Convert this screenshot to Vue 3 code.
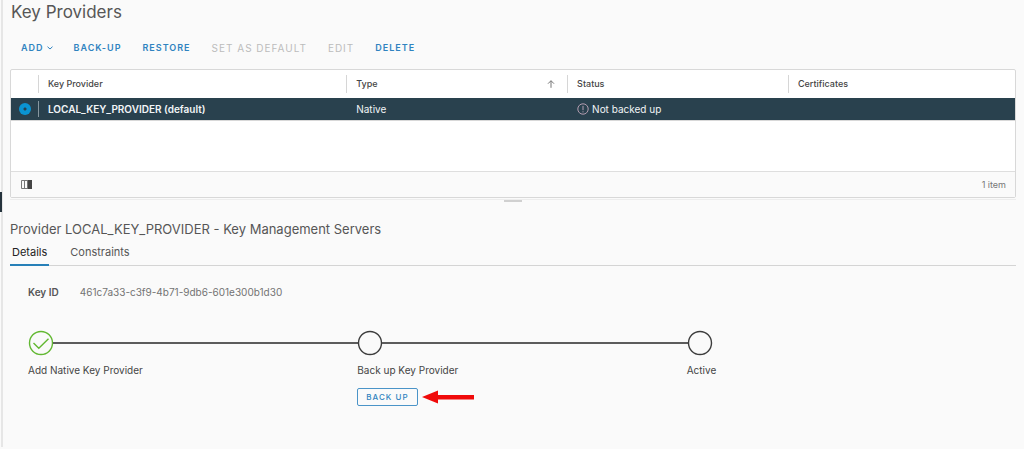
<script setup>
import { ref } from 'vue'

const actions = [
  { label: 'ADD', menu: true },
  { label: 'BACK-UP' },
  { label: 'RESTORE' },
  { label: 'SET AS DEFAULT', disabled: true },
  { label: 'EDIT', disabled: true },
  { label: 'DELETE' },
]
const providers = [
  { name: 'LOCAL_KEY_PROVIDER (default)', type: 'Native', status: 'Not backed up' },
]
const tabs = ['Details', 'Constraints']
const selected = ref(0)
const activeTab = ref('Details')
</script>

<template>
  <main class="page">
    <div class="side-handle"></div>
    <h1>Key Providers</h1>

    <div class="toolbar">
      <button v-for="a in actions" :key="a.label" type="button" :disabled="a.disabled">
        {{ a.label }}
        <svg v-if="a.menu" class="caret" width="6" height="4" viewBox="0 0 6 4" aria-hidden="true">
          <path d="M0.5 0.7 L3 3 L5.5 0.7" />
        </svg>
      </button>
    </div>

    <section class="grid">
      <table>
        <colgroup>
          <col class="c-pick" /><col class="c-name" /><col class="c-mid" /><col class="c-mid" /><col />
        </colgroup>
        <thead>
          <tr>
            <th></th>
            <th scope="col">Key Provider</th>
            <th scope="col">
              <span class="sorted">Type
                <svg width="8" height="8" viewBox="0 0 8 8" aria-hidden="true">
                  <path d="M4 7.8 V0.8 M1 3.7 L4 0.7 L7 3.7" />
                </svg>
              </span>
            </th>
            <th scope="col">Status</th>
            <th scope="col">Certificates</th>
          </tr>
        </thead>
        <tbody>
          <tr v-for="(p, i) in providers" :key="p.name">
            <td class="pick">
              <input v-model="selected" type="radio" name="provider" :value="i" :aria-label="p.name" />
            </td>
            <td class="name">{{ p.name }}</td>
            <td>{{ p.type }}</td>
            <td>
              <span class="status">
                <svg width="12" height="12" viewBox="0 0 12 12" aria-hidden="true">
                  <circle cx="6" cy="6" r="5.2" />
                  <path d="M6 2.8 V7.2 M6 8.3 V9.4" />
                </svg>
                {{ p.status }}
              </span>
            </td>
            <td></td>
          </tr>
        </tbody>
      </table>
      <div class="blank"></div>
      <footer>
        <button type="button" class="columns" aria-label="Columns">
          <svg width="11" height="9" viewBox="0 0 11 9" aria-hidden="true">
            <path class="frame" d="M0.5 0.5 H10.5 V8.5 H0.5 Z M3.5 0.5 V8.5 M6.5 0.5 V8.5" />
            <path class="fill" d="M7 0 H11 V9 H7 Z" />
          </svg>
        </button>
        <span>1 item</span>
      </footer>
    </section>
    <div class="splitter"><i></i></div>

    <h2>Provider LOCAL_KEY_PROVIDER - Key Management Servers</h2>
    <div class="tabs" role="tablist">
      <button
        v-for="t in tabs"
        :key="t"
        type="button"
        role="tab"
        :aria-selected="t === activeTab"
        :class="{ active: t === activeTab }"
        @click="activeTab = t"
      >{{ t }}</button>
    </div>

    <dl>
      <dt>Key ID</dt>
      <dd>461c7a33-c3f9-4b71-9db6-601e300b1d30</dd>
    </dl>

    <ol class="steps">
      <li>
        <div class="track">
          <svg class="done" width="26" height="26" viewBox="0 0 26 26" aria-hidden="true">
            <circle cx="13" cy="13" r="11.5" />
            <path d="M5.5 13 L10.8 18.3 L20.5 8.8" />
          </svg>
          <i class="line"></i>
        </div>
        <p>Add Native Key Provider</p>
      </li>
      <li>
        <div class="track">
          <svg width="26" height="26" viewBox="0 0 26 26" aria-hidden="true">
            <circle cx="13" cy="13" r="11.5" />
          </svg>
          <i class="line"></i>
        </div>
        <p>Back up Key Provider</p>
        <div class="action">
          <button type="button">BACK UP</button>
          <svg class="arrow" width="52" height="14" viewBox="0 0 52 14" aria-hidden="true">
            <path d="M0 7 L16 0.5 V5 H52 V9.5 H16 V13.5 Z" />
          </svg>
        </div>
      </li>
      <li>
        <div class="track">
          <svg width="26" height="26" viewBox="0 0 26 26" aria-hidden="true">
            <circle cx="13" cy="13" r="11.5" />
          </svg>
        </div>
        <p>Active</p>
      </li>
    </ol>
  </main>
</template>

<style>
body {
  background: #fafafa;
}
</style>

<style scoped>
.page {
  position: relative;
  box-sizing: border-box;
  min-height: calc(100vh - 2px);
  margin-left: 1px;
  padding: 1px 8px 0 7px;
  border-left: 2px solid #e6e6e6;
  color: #565656;
  font-family: Inter, "Liberation Sans", sans-serif;
  font-size: 10px;
  line-height: 14px;
}
.side-handle {
  position: absolute;
  left: -3px;
  top: 192px;
  width: 2px;
  height: 20px;
  background: #25333d;
}
h1, h2, p, dl, dd, ol {
  margin: 0;
  padding: 0;
  font-weight: 400;
}
h1 {
  margin-left: 1px;
  font-size: 17px;
  line-height: 22px;
}
button {
  padding: 0;
  border: 0;
  background: none;
  color: #2f83c0;
  font: inherit;
}
svg {
  flex: none;
  fill: none;
}
.toolbar {
  display: flex;
  gap: 21px;
  margin: 18px 0 14px 11px;
}
.toolbar button {
  display: flex;
  align-items: center;
  gap: 3px;
  font-size: 9px;
  font-weight: 600;
  letter-spacing: 1px;
}
.toolbar button:disabled {
  color: #bcbcbc;
  font-size: 10px;
  font-weight: 400;
}
.caret {
  stroke: #2f83c0;
}
.grid {
  border: 1px solid #d8d8d8;
  border-radius: 2px;
  background: #fff;
}
table {
  width: 100%;
  border-collapse: collapse;
  table-layout: fixed;
}
.c-pick { width: 27px; }
.c-name { width: 30.7%; }
.c-mid { width: 22%; }
th, td {
  box-sizing: border-box;
  padding: 0 12px 0 10px;
  text-align: left;
  background: linear-gradient(#d6d6d6, #d6d6d6) no-repeat left center / 1px 18px;
}
th {
  height: 28px;
  color: #454545;
  font-size: 9px;
  font-weight: 500;
}
td {
  height: 22px;
  padding-bottom: 1px;
  color: #f2f5f7;
  background-image: none;
}
th:first-child {
  background-image: none;
}
tbody tr {
  background: #29414e;
}
td.pick {
  padding: 0 0 1px 8px;
}
td.name {
  background-image: linear-gradient(#8797a0, #8797a0);
  background-size: 1px 16px;
  font-weight: 600;
}
input[type="radio"] {
  display: block;
  appearance: none;
  width: 12px;
  height: 12px;
  margin: 0;
  border-radius: 50%;
  background: radial-gradient(circle, #29414e 1px, #0a94d2 2px);
}
.sorted {
  display: flex;
  align-items: center;
  justify-content: space-between;
}
.sorted svg {
  stroke: #777;
}
.status {
  display: flex;
  align-items: center;
  gap: 3px;
}
.status svg {
  stroke: #b39db0;
}
.blank {
  height: 50px;
  border-top: 1px solid #d8d8d8;
}
footer {
  display: flex;
  align-items: center;
  justify-content: space-between;
  height: 25px;
  padding: 0 9px 0 10px;
  border-top: 1px solid #dedede;
  background: #fafafa;
  color: #777;
  font-size: 9px;
}
.columns {
  display: flex;
}
.frame { stroke: #777; }
.fill { fill: #444; }
.splitter {
  display: flex;
  justify-content: center;
  height: 4px;
  margin-top: 1px;
  border-top: 1px solid #ededed;
}
.splitter i {
  width: 18px;
  height: 2px;
  background: #d0d0d0;
}
h2 {
  margin-top: 16px;
  font-size: 13px;
  line-height: 18px;
}
.tabs {
  display: flex;
  gap: 19px;
  height: 27px;
  border-bottom: 1px solid #d4d4d4;
}
.tabs button {
  height: 28px;
  padding: 2px 2px 0;
  border-bottom: 2px solid transparent;
  color: #565656;
  font-size: 11px;
}
.tabs .active {
  border-color: #2780b8;
  color: #222;
}
dl {
  display: flex;
  gap: 21px;
  margin: 19px 0 0 18px;
}
dt {
  font-weight: 600;
}
dd {
  color: #737373;
}
.steps {
  display: grid;
  grid-template-columns: repeat(3, 1fr);
  margin: 31px 0 0 18px;
  list-style: none;
}
.track {
  display: flex;
  align-items: center;
  margin-bottom: 7px;
}
.track svg {
  stroke: #3c3c3c;
  stroke-width: 1.4;
}
.track .done {
  stroke: #62b832;
}
.line {
  flex: 1;
  height: 2px;
  margin: 0 -1px;
  background: #5c5c5c;
}
.steps p {
  color: #454545;
}
.action {
  display: flex;
  align-items: center;
  gap: 4px;
  margin-top: 11px;
}
.action button {
  padding: 1px 8px;
  border: 1px solid #4b94c8;
  border-radius: 2px;
  font-size: 8px;
  font-weight: 500;
  letter-spacing: 1px;
}
.arrow {
  fill: #f00a0a;
}
</style>
